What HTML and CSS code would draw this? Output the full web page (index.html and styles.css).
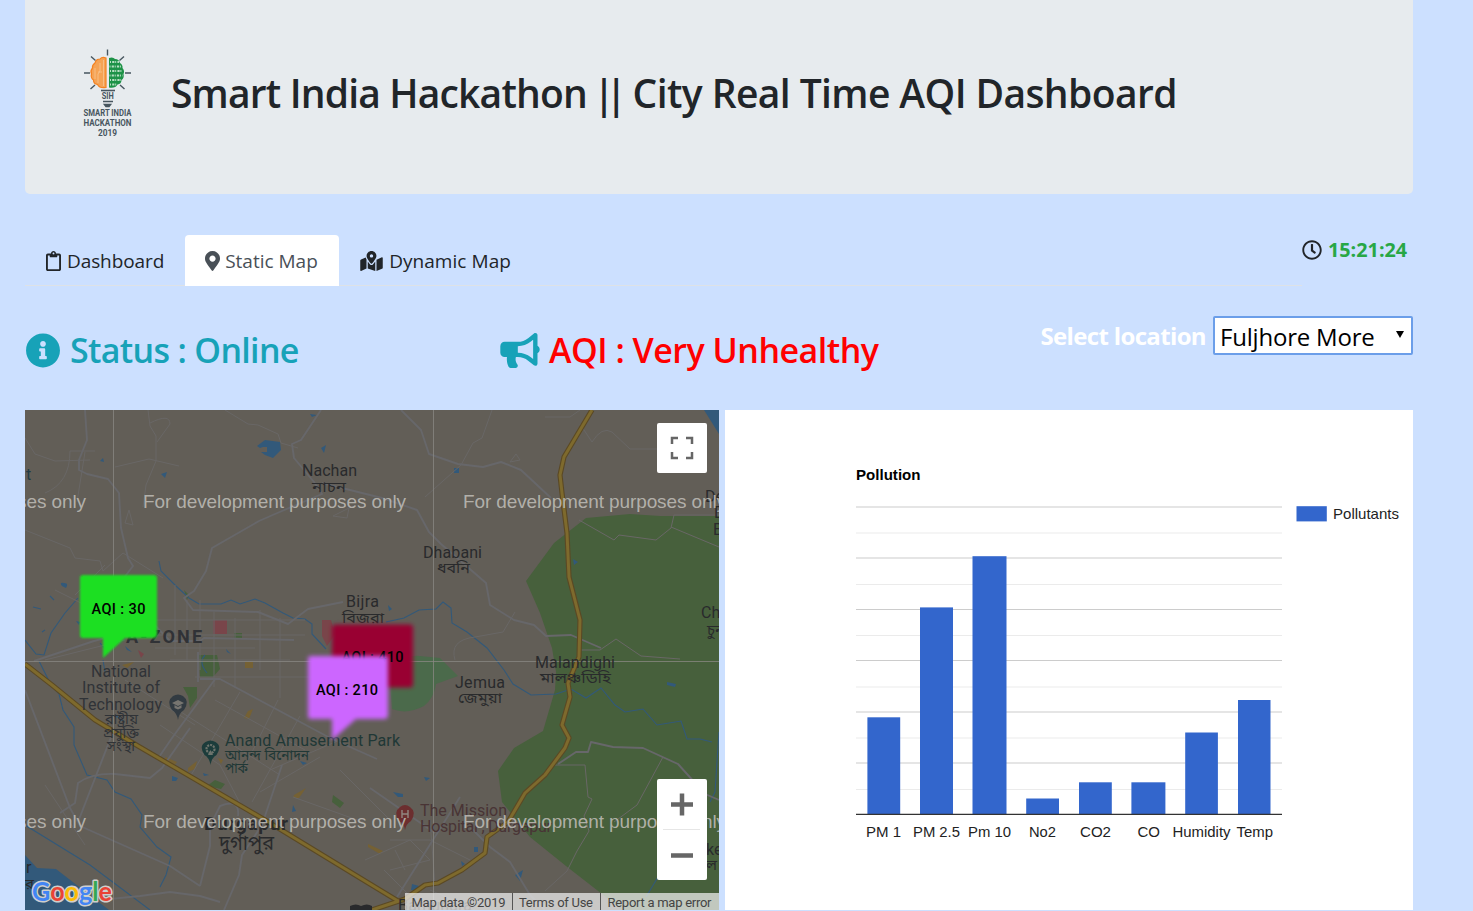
FILE: index.html
```html
<!DOCTYPE html>
<html lang="en">
<head>
<meta charset="utf-8">
<title>City Real Time AQI Dashboard</title>
<link rel="stylesheet" href="styles.css">
</head>
<body>
<main class="container">
  <header class="jumbotron">
    <svg class="brand" viewBox="0 0 60 100" width="60" height="100">
      <g stroke="#47565f" stroke-width="1.4" fill="none">
        <path d="M29.500 5.500v6M13 12.500l4.500 4M46 12.500l-4.500 4M6 29h6M47 29h6M12.500 45l4.500-4M46.500 45l-4.500-4"/>
      </g>
      <path d="M28 14q-4-1.500-6 1q-4 0-5 4q-3 2-2.500 5q-2.500 3-1 6q-1 4 2 6q0 4 4 4.500q2 4 8.500 3z" fill="#f5a355" stroke="#f58220" stroke-width="1.200"/>
      <path d="M25.500 16v26M22 19v8l-2 3v9M17 24v11M24 28h-4" stroke="#f9c590" stroke-width=".8" fill="none"/>
      <path d="M31 14q4-1.500 6 1q4 0 5 4q3 2 2.500 5q2.500 3 1 6q1 4-2 6q0 4-4 4.500q-2 4-8.500 3z" fill="#1d9247"/>
      <path d="M32 18h9M31.500 22.500h12M32 27h12M31.500 31.500h13M32 36h11M32 40.500h7" stroke="#b7dfc2" stroke-width="2" stroke-dasharray="1 1.200 2.200 .8" fill="none"/>
      <path d="M23 46.500h14" stroke="#47565f" stroke-width="1.600"/>
      <text x="29.800" y="54.500" class="brand-mark" textLength="12" lengthAdjust="spacingAndGlyphs">SIH</text>
      <path d="M25 57.500h10M26.500 60.500h6l-1.500 2h-3z" stroke="#47565f" stroke-width="1.600" fill="#47565f"/>
      <text x="29.500" y="72.300" class="brand-text" textLength="48" lengthAdjust="spacingAndGlyphs">SMART INDIA</text>
      <text x="29.500" y="82" class="brand-text" textLength="48" lengthAdjust="spacingAndGlyphs">HACKATHON</text>
      <text x="29.500" y="92.200" class="brand-text" textLength="19" lengthAdjust="spacingAndGlyphs">2019</text>
    </svg>
    <h1 class="title"><span class="t1">Smart India Hackathon </span><span class="bars">||</span><span class="t2"> City Real Time AQI Dashboard</span></h1>
  </header>

  <div class="navrow">
    <nav class="tabs">
      <a class="tab"><svg viewBox="0 0 384 512" width="15" height="20"><path d="M336 64h-80c0-35.300-28.700-64-64-64s-64 28.700-64 64H48C21.500 64 0 85.500 0 112v352c0 26.500 21.500 48 48 48h288c26.500 0 48-21.500 48-48V112c0-26.500-21.500-48-48-48zM192 40c13.300 0 24 10.700 24 24s-10.700 24-24 24-24-10.700-24-24 10.700-24 24-24zm144 418c0 3.300-2.700 6-6 6H54c-3.300 0-6-2.700-6-6V118c0-3.300 2.700-6 6-6h42v36c0 6.600 5.400 12 12 12h168c6.600 0 12-5.400 12-12v-36h42c3.300 0 6 2.700 6 6z"/></svg><span>Dashboard</span></a>
      <a class="tab active"><svg viewBox="0 0 384 512" width="15" height="20"><path d="M172.268 501.670C26.970 291.031 0 269.413 0 192 0 85.961 85.961 0 192 0s192 85.961 192 192c0 77.413-26.970 99.031-172.268 309.670-9.535 13.774-29.930 13.773-39.464 0zM192 272c44.183 0 80-35.817 80-80s-35.817-80-80-80-80 35.817-80 80 35.817 80 80 80z"/></svg><span>Static Map</span></a>
      <a class="tab"><svg viewBox="0 0 576 512" width="23" height="20"><path d="M288 0c-69.590 0-126 56.410-126 126 0 56.260 82.350 158.800 113.900 196.020 6.390 7.540 17.820 7.540 24.200 0C331.650 284.800 414 182.260 414 126 414 56.410 357.590 0 288 0zm0 168c-23.200 0-42-18.800-42-42s18.800-42 42-42 42 18.800 42 42-18.800 42-42 42zM20.120 215.950A32.006 32.006 0 0 0 0 245.660v250.320c0 11.320 11.430 19.060 21.940 14.860L160 448V214.920c-8.840-15.980-16.070-31.540-21.250-46.420L20.120 215.950zM288 359.670c-14.070 0-27.380-6.180-36.510-16.960-19.660-23.200-40.570-49.620-59.490-76.720v182l192 64V266c-18.920 27.090-39.820 53.520-59.490 76.720-9.130 10.770-22.440 16.950-36.510 16.950zm266.060-198.510L416 224v288l139.880-55.950A31.996 31.996 0 0 0 576 426.340V176.020c0-11.320-11.430-19.060-21.940-14.860z"/></svg><span>Dynamic Map</span></a>
    </nav>
    <div class="clock"><svg viewBox="0 0 512 512" width="20" height="20"><path d="M256 8C119 8 8 119 8 256s111 248 248 248 248-111 248-248S393 8 256 8zm0 448c-110.500 0-200-89.500-200-200S145.500 56 256 56s200 89.500 200 200-89.500 200-200 200zm61.800-104.400l-84.900-61.700c-3.100-2.300-4.900-5.900-4.900-9.700V116c0-6.600 5.400-12 12-12h32c6.600 0 12 5.400 12 12v141.700l66.800 48.600c5.400 3.900 6.500 11.400 2.600 16.800L334.600 349c-3.900 5.300-11.400 6.500-16.800 2.600z"/></svg><b>15:21:24</b></div>
  </div>

  <section class="statusrow">
    <h2 class="status"><svg viewBox="0 0 512 512" width="36" height="35"><path d="M256 8C119.043 8 8 119.083 8 256c0 136.997 111.043 248 248 248s248-111.003 248-248C504 119.083 392.957 8 256 8zm0 110c23.196 0 42 18.804 42 42s-18.804 42-42 42-42-18.804-42-42 18.804-42 42-42zm56 254c0 6.627-5.373 12-12 12h-88c-6.627 0-12-5.373-12-12v-24c0-6.627 5.373-12 12-12h12v-64h-12c-6.627 0-12-5.373-12-12v-24c0-6.627 5.373-12 12-12h64c6.627 0 12 5.373 12 12v100h12c6.627 0 12 5.373 12 12v24z"/></svg><span class="s-text">Status : Online</span></h2>
    <h2 class="aqi"><svg viewBox="0 0 576 512" width="40" height="35"><path d="M576 240c0-23.630-12.950-44.040-32-55.120V32.010C544 23.260 537.020 0 512 0c-7.120 0-14.190 2.380-19.980 7.020l-85.030 68.030C364.280 109.190 310.660 128 256 128H64c-35.350 0-64 28.650-64 64v96c0 35.350 28.650 64 64 64h33.700c-1.390 10.480-2.180 21.140-2.180 32 0 39.770 9.260 77.350 25.560 110.940 5.190 10.690 16.520 17.060 28.400 17.060h74.280c26.050 0 41.690-29.840 25.900-50.560-16.400-21.520-26.150-48.360-26.150-77.440 0-11.110 1.620-21.790 4.410-32H256c54.660 0 108.280 18.810 150.980 52.950l85.030 68.030a32.023 32.023 0 0 0 19.980 7.020c24.920 0 32-22.780 32-32V295.130C563.050 284.040 576 263.630 576 240zm-96 141.420l-33.050-26.440C392.950 311.780 325.120 288 256 288v-96c69.120 0 136.950-23.780 190.950-66.980L480 98.580v282.840z"/></svg><span class="a-text">AQI : Very Unhealthy</span></h2>
    <div class="picker"><b>Select location</b><div class="select"><span>Fuljhore More</span><i class="caret"></i></div></div>
  </section>

  <section class="panels">
    <svg class="map" viewBox="25 410 694 500" width="694" height="500">
      <defs><filter id="soft" x="-10%" y="-10%" width="120%" height="120%"><feGaussianBlur stdDeviation="1.300"/></filter><filter id="softer" x="-10%" y="-10%" width="120%" height="120%"><feGaussianBlur stdDeviation="2"/></filter></defs>
      <rect x="25" y="410" width="694" height="500" fill="#625e57"/>
      <path class="forest" d="M719 516L660 516 630 514 586 518 554 543 526 581 540 613 552 648 556 672 555 690 543 731 514 748 498 771 502 802 530 837 566 866 602 894 622 910 719 910z"/>
      <path d="M390 682q4-28 30-26l20 2 18 18-22 8q-2 14-12 22-17 9-32 3z" fill="#4b6a4b"/>
      <path d="M199 655h18l3 14-7 8h-13zM183 687h14v11l-7 10-2-12zM207 786l8-6 10 4-4 5zM333 795l11 8-4 5-8-6zM184 590l5 5-2 5zM234 633h8v6h-8z" class="park"/>
      <path d="M213 620h14v14h-14zM322 620h9l4 14-8 12-5-10zM138 650l6 4-3 4z" fill="#79454a"/>
      <path d="M245 662h8v6h-8zM248 711l5-2-4 10-5-1zM165 757l12 5-3 4-9-5zM188 768l9-7-2 8-7 3zM218 758l5 2-2 4zM294 795l12-7-7 10h-6zM368 844l15 7-3 3-12-7zM122 665l12-3-7 6z" fill="#756134"/>
      <g class="water">
        <path d="M25 855L37 868 56 869 109 910H25zM704 410h15v24zM257 446l8-6 15 2 1 8-8 8-8-3-4-3 6 0 0-5-4 0-3 1zM310 414l7 1-5 2zM321 448l5-3-2 8zM161 474l6-2-2 6zM100 461l3-3 1 4zM62 586q-3-4 2-3 5 0 2 5zM454 468h5v5h-5zM573 559l5 3-4 3zM667 682l9 2-1 3-8-2zM393 792l10 2v3h-5zM424 777l6 1-4 3zM388 605l4 4-3 2zM172 776l6 2-2 3h-4zM300 761l7 2-4 2zM203 773l6 2-5 1zM293 805l3 6-4 1zM515 875l8-5-3 11zM474 847h4v5h-4zM461 861l4 3-3 2zM412 884l7 2-4 5-4-1zM76 621l4 1-1 3zM125 646l7 6-5-2zM226 649l5 5-4-2z"/>
      </g>
      <g class="stream">
        <path d="M159 561l2 10 15 15 13 12 10 6 22 0 10-4 9 4 15-5 10 4 18 10 10 5 12 1 7 5v10l14 15"/>
        <path d="M25 640l11 14 8 1 7-22 14-20 13-15M39 661l12 24 8 9 4 16 11 17 0 18 13 30 20 5 8 12 16 7 11 16-2 12 17 20 14 10-5 18-6 12M386 622l18-4 15-8 17-1 7-7 8 6 1 15 15 9 20 16 17 22 9 14 18 11 25-1 15-5 15 9 15-10 14 17 10 7 18-3 14 16 24-4 6 18 13 0 12 3M25 825l65 40 60 45M719 732l-4 60-5 10M658 877l-12 20M205 655q-7 7 2 18"/>
        <path d="M33 607l8 2M42 632l3-2M100 643l6 7M50 596l4 4M103 660l2 12M115 715l8 6"/>
      </g>
      <g class="minor">
        <path d="M148 410l2 16 6 10 0 25-10 24-3 22M25 438l10 16 20 7 35-1M85 452l-8 50M150 423q20-10 20 1l-13 18M25 530l45 18 5 10 25 3 3 10 20-18 40 25M115 467l34-8 30 7M225 410l23 14 10 1 20 9M278 434l3 9 17 5M45 493q25-10 25-42l25 0M129 510l4 15-8-2zM333 516l16-8-2 10z"/>
        <path d="M492 410l-10 28-9 5-12 22-36 32M580 410l-10 7-25 0M580 424l12 18q10-16 20-10l18 17 30 0M579 520l35 20 5-5 37 5 15-12 3-13 45 0M671 527l48 20M510 462l10-2-4-6zM580 650l20 0 16-11 25 17 39 3M455 660q-6-20 20-23l28-5 12-20M555 765h30l3 32 4 2-8 17 5 15-12 20-10 20-22 20M663 757l-26 48-23 17"/>
        <path d="M175 585v70M187 600v60M200 600v70M214 612v75M235 618v70M260 610v60M280 618v80M150 620h155M155 635h150M155 648l100 0M170 660l120 0M195 677l120 0M125 680l70 45M170 705l110 70M215 700l90 50M240 692l-50 85M278 700l-35 70M300 716l-48 86M340 740l-70 30M320 757l-60 35M340 770l50 50M293 797l70 25M160 725l60 40 20 38M45 785l40 60"/>
        <path d="M390 840l40 0 40 20M430 820l5 65M395 850l10 20M365 860l45-20 20 20-40 10M45 660l80-20M55 590l50 25M75 595l30-30M384 870l40 40M430 890l45 20"/>
      </g>
      <g class="road">
        <path d="M85 410l2 30-8 20v10l8 4 21 5 11 14 2 35 7 30 5 8-13 17M321 410l-20 30-9 4 2 14 20 24 8 12-47 20-16 7-47 27-6 23-12 20-10 7 9 12 65 2 30 12 20-15 35-7M322 483l60 15 35 12 12 22 12 12 45 39 4 22 24 15 20 5 12 11 25-1 30 13"/>
        <path d="M401 410l20 20 8 24 29 10 25 3 18-5 20 8 30 28M34 661l60-20 45-12M145 615l25 26 30 0 4-3 90 2M198 652v30M216 678l-44 60-15 22M200 679h20l112 60 45 20M113 732l-35 90M60 813l15-10 3-20q14-10 37-9l35 4 12-10 28-40M282 765l-20 60-20 30-3 20-15 35M200 886l10-40 0-20 10-20q20-8 18 10M100 900l40-4 30-4 30 4 20 6"/>
        <path d="M558 764l18-12h12l3-10 22 5 30 1 35 16 27 30 14 6M370 788l65 45M470 827l20 20 20 15 20 33 15 15M460 797l-63 100M25 690l45 118 10 18 90 40 30 20" />
      </g>
      <g class="highway">
        <path d="M592 410L564 457 560 475 562 493 567 533 569 577 580 620 579 657 568 683 570 697 562 725 569 738 565 748 545 775 525 793 508 822 487 837 485 853 462 870 438 883 425 885 405 899 372 910M25 664L52 685 95 720 138 746 265 820 370 884 398 901"/>
      </g>
      <g class="highway-core">
        <path d="M592 410L564 457 560 475 562 493 567 533 569 577 580 620 579 657 568 683 570 697 562 725 569 738 565 748 545 775 525 793 508 822 487 837 485 853 462 870 438 883 425 885 405 899 372 910M25 664L52 685 95 720 138 746 265 820 370 884 398 901"/>
      </g>
      <path d="M113.500 410v500M433.500 410v500M25 661.500h694" stroke="#8b8984" stroke-opacity=".75" fill="none"/>
      <g class="labels">
        <text x="302" y="476" textLength="55">Nachan</text><text class="bn" x="312" y="492" textLength="34" lengthAdjust="spacingAndGlyphs">নাচন</text>
        <text x="423" y="558" textLength="59">Dhabani</text><text class="bn" x="437" y="573" textLength="33" lengthAdjust="spacingAndGlyphs">ধবনি</text>
        <text x="346" y="607" textLength="33">Bijra</text><text class="bn" x="342" y="623" textLength="42" lengthAdjust="spacingAndGlyphs">বিজরা</text>
        <text x="535" y="668" textLength="80">Malandighi</text><text class="bn" x="540" y="683" textLength="71" lengthAdjust="spacingAndGlyphs">মালঞ্চডিহি</text>
        <text x="455" y="688" textLength="50">Jemua</text><text class="bn" x="458" y="703" textLength="44" lengthAdjust="spacingAndGlyphs">জেমুয়া</text>
        <text x="126" y="643" class="zone" textLength="76">A-ZONE</text>
        <text x="26" y="480" fill="#233c45">t</text>
        <text x="705" y="502">De</text><text x="714" y="518">B</text><text x="713" y="535">B</text>
        <text x="701" y="618">Ch</text><text class="bn" x="707" y="635">চুন</text>
        <text x="706" y="855">ke</text><text class="bn" x="706" y="870">ল</text>
        <text x="26" y="873">r</text><text class="bn" x="25" y="889">র</text>
        <g class="poi"><text x="91" y="677" textLength="60">National</text><text x="82" y="693" textLength="78">Institute of</text><text x="79" y="710" textLength="83">Technology</text>
        <text class="bn" x="105" y="724" textLength="33" lengthAdjust="spacingAndGlyphs">রাষ্ট্রীয়</text><text class="bn" x="103" y="738" textLength="36" lengthAdjust="spacingAndGlyphs">প্রযুক্তি</text><text class="bn" x="107" y="751" textLength="28" lengthAdjust="spacingAndGlyphs">সংস্থা</text></g>
        <g class="amuse"><text x="225" y="746" textLength="175">Anand Amusement Park</text><text class="bn" x="225" y="760" textLength="84" lengthAdjust="spacingAndGlyphs">আনন্দ বিনোদন</text><text class="bn" x="225" y="773" textLength="23" lengthAdjust="spacingAndGlyphs">পার্ক</text></g>
        <g class="hospital"><text x="420" y="816" textLength="87">The Mission</text><text x="420" y="832" textLength="132">Hospital , Durgapur</text></g>
        <text x="204" y="830" class="city" textLength="84">Durgapur</text><text class="bn big" x="219" y="850" textLength="55" lengthAdjust="spacingAndGlyphs">দুর্গাপুর</text>
        <text x="398" y="911" textLength="74">Bamunara</text>
      </g>
      <g class="pins">
        <path d="M178 720q-1-7-6-10-6-9 1-14 5-3 10 0 7 5 1 14-5 3-6 10z" fill="#323b42"/><path d="M172 703l6-3 6 3-6 3zM174.500 705v3l3.500 1.500 3.500-1.500v-3l-3.500 2z" fill="#777570"/>
        <path d="M210.500 765q-1-7-6-10-6-9 1-13 5-3 10 0 7 4 1 13-5 3-6 10z" fill="#1c3c3b"/><circle cx="210.500" cy="749" r="4" fill="none" stroke="#6e746d" stroke-width="2.200" stroke-dasharray="2 1"/><path d="M208 755l2.500-5 2.500 5z" fill="#6e746d"/>
        <path d="M405 830q-1-7-6-9-6-9 1-14 5-4 10 0 7 5 1 14-5 3-6 9z" fill="#6c2e2f"/><path d="M402 810v8M408 810v8M402 814h6" stroke="#918781" stroke-width="1.400"/>
        <path d="M350 906q6-3 11 0 6-3 11 0v4h-22z" fill="#292a2c"/>
      </g>
      <g class="watermark">
        <text x="-177" y="508" textLength="263">For development purposes only</text><text x="143" y="508" textLength="263">For development purposes only</text><text x="463" y="508" textLength="263">For development purposes only</text>
        <text x="-177" y="828" textLength="263">For development purposes only</text><text x="143" y="828" textLength="263">For development purposes only</text><text x="463" y="828" textLength="263">For development purposes only</text>
      </g>
      <path filter="url(#soft)" d="M82 575h72q3 0 3 3v56q0 4-4 4h-28l-22 20v-20H83q-3 0-3-3v-57q0-3 3-3z" fill="#1bdf24"/>
      <text class="pin-text" x="91.500" y="614" textLength="54">AQI : 30</text>
      <path filter="url(#softer)" d="M335 624.500h75q3 0 3 3v57q0 3-3 3h-75q-3 0-3-3v-57q0-3 3-3z" fill="#990033"/>
      <text class="pin-text" x="341.500" y="662" textLength="62">AQI : 410</text>
      <path filter="url(#softer)" d="M311 656h74q3 0 3 3v56q0 4-4 4h-28l-24 21v-21H311q-3 0-3-3v-57q0-3 3-3z" fill="#cc66ff"/>
      <text class="pin-text" x="316" y="695" textLength="62">AQI : 210</text>
      <rect x="657" y="423" width="50" height="50" rx="2" fill="#fff"/>
      <path d="M672 444v-6h6M686 438h6v6M692 452v6h-6M678 458h-6v-6" stroke="#666" stroke-width="2.500" fill="none"/>
      <rect x="657" y="779" width="50" height="101" rx="2" fill="#fff"/>
      <path d="M663 829.500h37" stroke="#e6e6e6"/>
      <path d="M671 804.500h22M682 793.500v22M671 855.500h22" stroke="#666" stroke-width="4.500"/>
      <text x="32" y="901" class="google" textLength="80" lengthAdjust="spacingAndGlyphs"><tspan fill="#4285f4">G</tspan><tspan fill="#ea4335">o</tspan><tspan fill="#fbbc05">o</tspan><tspan fill="#4285f4">g</tspan><tspan fill="#34a853">l</tspan><tspan fill="#ea4335">e</tspan></text>
      <rect x="405" y="893" width="314" height="17" fill="#f5f5f5" fill-opacity=".7"/>
      <path d="M512.500 893v17M600.500 893v17" stroke="#555"/>
      <g class="legal"><text x="411.500" y="907" textLength="94">Map data ©2019</text><text x="519" y="907" textLength="74">Terms of Use</text><text x="607.500" y="907" textLength="104">Report a map error</text></g>
    </svg>

    <svg class="chart" viewBox="725 410 688 500" width="688" height="500">
      <text x="856" y="480" class="chart-title" textLength="64.500" lengthAdjust="spacingAndGlyphs">Pollution</text>
      <path d="M856 533h426M856 584.500h426M856 635.500h426M856 687h426M856 738h426M856 789.500h426" stroke="#ebebeb" fill="none"/>
      <path d="M856 507h426M856 558h426M856 609.500h426M856 660.500h426M856 712h426M856 763h426" stroke="#ccc" stroke-width="1.200" fill="none"/>
      <g fill="#3366cc">
        <rect x="867.400" y="717.300" width="32.800" height="97"/><rect x="920" y="607.400" width="33" height="207"/><rect x="972.500" y="556.200" width="34" height="258"/><rect x="1026.200" y="798.500" width="32.800" height="16"/><rect x="1079" y="782.300" width="32.800" height="32"/><rect x="1131.400" y="782.300" width="34" height="32"/><rect x="1185.200" y="732.500" width="32.700" height="82"/><rect x="1238" y="700" width="32.500" height="114"/>
        <rect x="1296.500" y="506.200" width="30.300" height="15.200"/>
      </g>
      <path d="M856 814.300h426" stroke="#333" stroke-width="1.200"/>
      <g class="axis">
        <text x="866" y="837" textLength="35" lengthAdjust="spacingAndGlyphs">PM 1</text><text x="913" y="837" textLength="47" lengthAdjust="spacingAndGlyphs">PM 2.5</text><text x="968" y="837" textLength="43" lengthAdjust="spacingAndGlyphs">Pm 10</text><text x="1029" y="837" textLength="27" lengthAdjust="spacingAndGlyphs">No2</text><text x="1080" y="837" textLength="31" lengthAdjust="spacingAndGlyphs">CO2</text><text x="1137.500" y="837" textLength="22.500" lengthAdjust="spacingAndGlyphs">CO</text><text x="1172.500" y="837" textLength="58" lengthAdjust="spacingAndGlyphs">Humidity</text><text x="1236.500" y="837" textLength="36.500" lengthAdjust="spacingAndGlyphs">Temp</text>
        <text x="1333" y="519" textLength="66" lengthAdjust="spacingAndGlyphs">Pollutants</text>
      </g>
    </svg>
  </section>
</main>
</body>
</html>
```

FILE: styles.css
```css
* { box-sizing: border-box; }
body { margin: 0; background: #cce0ff; color: #212529; font-family: "Open Sans", "Noto Sans", sans-serif; overflow: hidden; }
svg { display: block; flex: none; fill: currentColor; }
.container { width: 1388px; margin-left: 25px; height: 911px; }
.jumbotron { height: 194px; background: #e7ebee; border-radius: 0 0 5px 5px; padding: 44px 0 0 53px; display: flex; align-items: flex-start; }
.brand { margin-right: 33px; }
.brand-mark, .brand-text { font-family: Roboto, sans-serif; font-weight: 700; fill: #47565f; text-anchor: middle; font-size: 8.5px; }
.title { margin: 22px 0 0; font-size: 39px; line-height: 54px; font-weight: 600; white-space: pre; }
.t1 { letter-spacing: -0.83px; }
.bars { letter-spacing: -9px; margin: 0 5px 0 -3px; }
.t2 { letter-spacing: -0.6px; }
.navrow { display: flex; height: 51px; margin-top: 41px; }
.tabs { display: flex; width: 1277px; height: 51px; border-bottom: 1px solid #dee2e6; }
.tab { display: flex; align-items: center; height: 51px; padding: 0 21px; font-size: 19px; letter-spacing: -0.1px; white-space: nowrap; }
.tab span { margin-left: 6px; }
.tab.active { background: #fff; color: #495057; border-radius: 4px 4px 0 0; padding: 0 20px; width: 154px; }
.tab.active span { margin-left: 5px; letter-spacing: 0; }
.tab.active + .tab span { letter-spacing: 0.05px; }
.clock { display: flex; align-items: center; height: 29px; font-size: 19.8px; }
.clock b { color: #28a745; margin-left: 6px; white-space: nowrap; }
.statusrow { display: flex; height: 124px; }
.status, .aqi { display: flex; align-items: center; height: 50px; margin: 39px 0 0; font-size: 34px; line-height: 50px; font-weight: 600; white-space: nowrap; color: #17a2b8; }
.status { width: 475px; letter-spacing: -0.68px; }
.aqi { letter-spacing: -0.5px; }
.s-text, .a-text { margin-left: 9px; }
.a-text { color: red; }
.picker { display: flex; align-items: center; height: 40px; margin: 29px 0 0 auto; font-size: 24px; white-space: nowrap; }
.picker b { color: #fff; margin-right: 7px; letter-spacing: -0.65px; padding-top: 1px; }
.select { display: flex; align-items: center; justify-content: space-between; width: 200px; height: 39px; background: #fff; border: 2px solid #6b9ee9; border-radius: 2px; color: #000; padding: 2px 7px 0 5px; letter-spacing: -0.2px; }
.caret { width: 0; height: 0; border: 4px solid transparent; border-top: 7px solid #000; border-bottom: 0; margin-top: -3px; }
.panels { display: flex; gap: 6px; height: 500px; }
.chart { background: #fff; }
.map { overflow: hidden; }
.forest, .park { fill: #47603c; }
.water { fill: #32597a; }
.stream { fill: none; stroke: #32597a; stroke-width: 1.1; }
.minor { fill: none; stroke: #696766; stroke-width: 1; }
.road { fill: none; stroke: #67676a; stroke-width: 1.9; stroke-linejoin: round; }
.highway { fill: none; stroke: #5b4924; stroke-width: 5.2; stroke-linejoin: round; }
.highway-core { fill: none; stroke: #7e6a2d; stroke-width: 3; stroke-linejoin: round; }
.labels { font-family: Roboto, "Noto Sans", sans-serif; font-size: 16px; fill: #292a2c; }
.labels .bn { font-family: "Noto Sans Bengali", "Noto Sans", sans-serif; font-size: 15px; }
.labels .big { font-size: 20px; }
.labels .zone { font-weight: 700; font-size: 18px; fill: #303236; }
.labels .city { font-weight: 700; font-size: 19px; }
.poi { fill: #303337; }
.amuse { fill: #203836; }
.hospital { fill: #493435; }
.watermark { font: 19px "Liberation Sans", sans-serif; fill: #bdbbb5; fill-opacity: .9; }
.pin-text { font: 500 14.5px Roboto, sans-serif; fill: #000; }
.google { font: 700 27px Lato, sans-serif; stroke: #cfcfcd; stroke-width: 3px; paint-order: stroke; stroke-linejoin: round; }
.legal { font: 13px Roboto, sans-serif; fill: #444; }
.chart-title { font: 700 15px "Liberation Sans", sans-serif; fill: #000; }
.axis { font: 15px "Liberation Sans", sans-serif; fill: #222; }
```
